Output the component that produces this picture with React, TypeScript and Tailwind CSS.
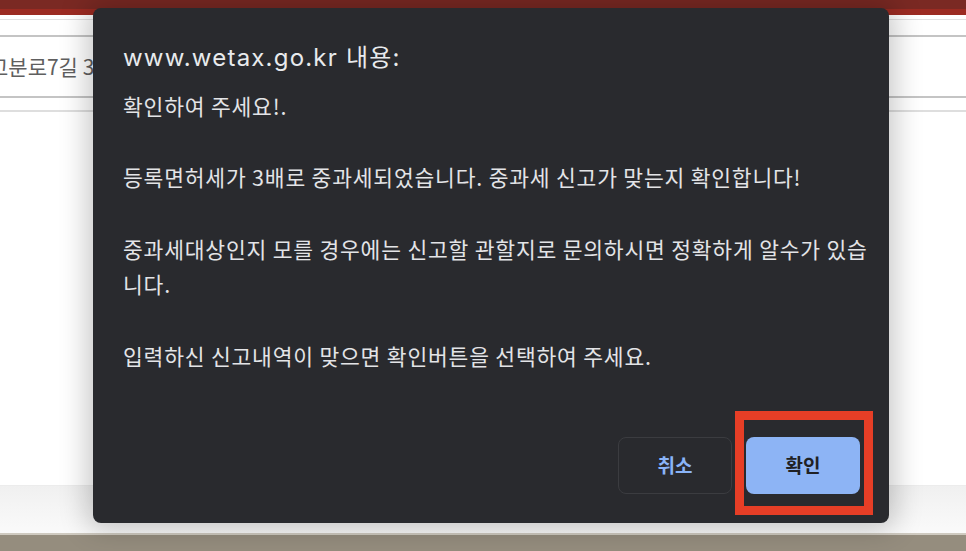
export default function App() {
  const lines = [
    '확인하여 주세요!.',
    '',
    '등록면허세가 3배로 중과세되었습니다. 중과세 신고가 맞는지 확인합니다!',
    '',
    '중과세대상인지 모를 경우에는 신고할 관할지로 문의하시면 정확하게 알수가 있습',
    '니다.',
    '',
    '입력하신 신고내역이 맞으면 확인버튼을 선택하여 주세요.',
  ]

  return (
    <div className="relative w-[966px] h-[551px] overflow-hidden bg-white font-['Inter','Noto_Sans_CJK_KR',sans-serif]">
      {/* page behind the dialog */}
      <div className="flex flex-col h-full">
        <div className="h-[9px] bg-[#7a2923]" />
        <div className="h-[6px] bg-[#9c2b22]" />
        <div className="h-[5px] bg-white border-b border-[#e2e2e2]" />
        <div className="h-[15px] bg-white" />
        <div className="h-[63px] border-y-2 border-[#c4c4c4] bg-white flex items-center overflow-hidden">
          <span className="-ml-[11px] text-[21px] text-[#5f5f5f] font-['Noto_Sans_CJK_KR',sans-serif]">고분로7길 35</span>
        </div>
        <div className="h-[14px] bg-white border-b-2 border-[#dedede]" />
        <div className="flex-1 bg-white" />
        <div className="h-[48px] bg-gradient-to-b from-[#f0f0f0] to-[#fafafa] border-t border-[#ececec]" />
        <div className="h-[2px] bg-[#cfcac0]" />
        <div className="h-[16px] bg-[#958d7e]" />
      </div>

      {/* alert dialog */}
      <div className="absolute left-[93px] top-[8px] w-[796px] h-[515px] rounded-[8px] bg-[#292a2e] shadow-[0_0_28px_6px_rgba(0,0,0,0.22)] flex flex-col pt-[35px] pl-[30px] pr-[29px] pb-[29px]">
        <h1 className="text-[24px] leading-[30px] text-[#e8eaed] tracking-[1.2px]">www.wetax.go.kr 내용:</h1>
        <div className="mt-[15px] text-[21.5px] leading-[35.7px] tracking-[0.8px] text-[#e3e4e7] font-['Noto_Sans_CJK_KR',sans-serif] whitespace-nowrap">
          {lines.map((l, i) => (
            <div key={i} className="h-[35.7px]">{l}</div>
          ))}
        </div>
        <div className="mt-auto flex justify-end gap-[14px]">
          <button className="w-[114px] h-[57px] rounded-[8px] border border-[#3b3c40] text-[19px] font-semibold text-[#8ab4f8] font-['Noto_Sans_CJK_KR',sans-serif]">
            취소
          </button>
          <button className="w-[114px] h-[57px] rounded-[8px] bg-[#8db4f5] text-[19px] font-semibold text-[#202124] font-['Noto_Sans_CJK_KR',sans-serif]">
            확인
          </button>
        </div>
      </div>

      {/* red highlight annotation */}
      <div className="absolute left-[735px] top-[411px] w-[138px] h-[104px] border-[9px] border-[#e63e26]" />
    </div>
  )
}
